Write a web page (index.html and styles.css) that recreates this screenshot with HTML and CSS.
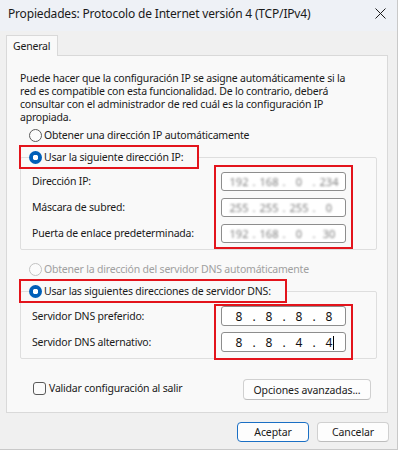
FILE: index.html
```html
<!DOCTYPE html>
<html lang="es">
<head>
<meta charset="utf-8">
<title>Propiedades: Protocolo de Internet versión 4 (TCP/IPv4)</title>
<link rel="stylesheet" href="styles.css">
</head>
<body>
<div class="window">
  <div class="titlebar">
    <span class="title">Propiedades: Protocolo de Internet versión 4 (TCP/IPv4)</span>
    <svg class="close" width="11" height="11" viewBox="0 0 11 11"><path d="M0.5 0.5L10.5 10.5M10.5 0.5L0.5 10.5" stroke="#1b1b1b" stroke-width="1"/></svg>
  </div>
  <div class="tabs"><div class="tab">General</div></div>
  <div class="panel">
    <p class="intro">Puede hacer que la configuración IP se asigne automáticamente si la<br>red es compatible con esta funcionalidad. De lo contrario, deberá<br>consultar con el administrador de red cuál es la configuración IP<br>apropiada.</p>

    <div class="radio-row first"><span class="radio"></span><span>Obtener una dirección IP automáticamente</span></div>

    <div class="group ip-group">
      <div class="legend-box"><span class="legend"><span class="radio checked"></span><span>Usar la siguiente dirección IP:</span></span></div>
      <div class="group-body">
        <div class="labels">
          <div class="label">Dirección IP:</div>
          <div class="label">Máscara de subred:</div>
          <div class="label">Puerta de enlace predeterminada:</div>
        </div>
        <div class="mark">
          <div class="ipbox"><div class="fields blurred"><span class="f">192</span><span class="d">.</span><span class="f">168</span><span class="d">.</span><span class="f">0</span><span class="d">.</span><span class="f">234</span></div></div>
          <div class="ipbox"><div class="fields blurred"><span class="f">255</span><span class="d">.</span><span class="f">255</span><span class="d">.</span><span class="f">255</span><span class="d">.</span><span class="f">0</span></div></div>
          <div class="ipbox"><div class="fields blurred"><span class="f">192</span><span class="d">.</span><span class="f">168</span><span class="d">.</span><span class="f">0</span><span class="d">.</span><span class="f">30</span></div></div>
        </div>
      </div>
    </div>

    <div class="radio-row disabled"><span class="radio"></span><span>Obtener la dirección del servidor DNS automáticamente</span></div>

    <div class="group dns-group">
      <div class="legend-box"><span class="legend"><span class="radio checked"></span><span>Usar las siguientes direcciones de servidor DNS:</span></span></div>
      <div class="group-body">
        <div class="labels">
          <div class="label">Servidor DNS preferido:</div>
          <div class="label">Servidor DNS alternativo:</div>
        </div>
        <div class="mark">
          <div class="ipbox"><div class="fields"><span class="f">8</span><span class="d">.</span><span class="f">8</span><span class="d">.</span><span class="f">8</span><span class="d">.</span><span class="f">8</span></div></div>
          <div class="ipbox"><div class="fields"><span class="f">8</span><span class="d">.</span><span class="f">8</span><span class="d">.</span><span class="f">4</span><span class="d">.</span><span class="f">4<span class="caret"></span></span></div></div>
        </div>
      </div>
    </div>

    <div class="bottom-row">
      <label class="check"><span class="checkbox"></span><span>Validar configuración al salir</span></label>
      <button class="btn adv">Opciones avanzadas...</button>
    </div>
  </div>
  <div class="footer">
    <button class="btn primary">Aceptar</button>
    <button class="btn">Cancelar</button>
  </div>
</div>
</body>
</html>
```

FILE: styles.css
```css
* { box-sizing: border-box; }
html, body { margin: 0; padding: 0; }
body {
  width: 398px;
  height: 450px;
  overflow: hidden;
  background: #f0f0f0;
  font-family: "Noto Sans", "Open Sans", sans-serif;
  font-size: 10.5px;
  letter-spacing: -0.2px;
  color: #1a1a1a;
}
.window {
  width: 398px;
  height: 450px;
  background: #f0f0f0;
  border-right: 1px solid #c9c9c9;
  border-bottom: 1px solid #c9c9c9;
  display: flex;
  flex-direction: column;
}
.titlebar {
  height: 31px;
  background: #eef1f6;
  display: flex;
  align-items: center;
  justify-content: space-between;
  padding: 0 11px 4px 8px;
}
.title {
  font-size: 12px;
  letter-spacing: -0.18px;
  color: #1a1a1a;
}
.close { display: block; }
.tabs {
  padding: 4px 0 0 6px;
  display: flex;
}
.tab {
  width: 52px;
  height: 21px;
  background: #f9f9f9;
  border: 1px solid #d9d9d9;
  border-bottom: none;
  margin-bottom: -1px;
  padding: 2px 0 0 6px;
  line-height: 17px;
  position: relative;
  z-index: 1;
}
.panel {
  margin: 0 9px 0 6px;
  height: 358px;
  background: #f9f9f9;
  border: 1px solid #d9d9d9;
  padding: 16px 10px 0 13px;
  display: flex;
  flex-direction: column;
}
.intro {
  margin: 0;
  line-height: 13px;
  white-space: nowrap;
}
.radio-row {
  height: 20px;
  display: flex;
  align-items: center;
  gap: 2px;
  padding-left: 9px;
}
.radio-row.first { margin-top: 1px; }
.radio-row.disabled { margin-top: 9px; color: #a0a0a0; }
.radio {
  width: 13px;
  height: 13px;
  border-radius: 50%;
  border: 1px solid #5a5a5a;
  background: #fbfbfb;
  flex: none;
  display: inline-block;
}
.radio-row.disabled .radio { border-color: #c2c2c2; }
.radio.checked {
  border: none;
  background: radial-gradient(circle, #ffffff 0 2.6px, #005fb8 3px);
}
.group {
  margin-top: 12px;
  border: 1px solid #dedede;
  border-radius: 2px;
}
.legend-box {
  margin: -13px 0 0 -2px;
  width: fit-content;
  height: 24px;
  border: 2px solid #e3141c;
  padding-left: 8px;
  display: flex;
  align-items: center;
}
.legend {
  height: 20px;
  display: flex;
  align-items: center;
  gap: 2px;
  background: #f9f9f9;
  padding-right: 14px;
}
.group-body {
  display: flex;
  padding: 0 23px 0 11px;
}
.labels {
  flex: 1;
  display: flex;
  flex-direction: column;
}
.mark {
  width: 139px;
  border: 2px solid #e3141c;
  display: flex;
  flex-direction: column;
  padding: 0 5px;
}
.ipbox {
  width: 125px;
  background: #ffffff;
  border: 1px solid #8d8d8d;
  border-radius: 3px;
  display: flex;
  align-items: center;
  padding-left: 6px;
  overflow: hidden;
}
.fields { display: flex; align-items: center; letter-spacing: 0; }
.f { width: 22px; text-align: center; font-size: 12px; color: #111; white-space: nowrap; }
.d { width: 8px; text-align: center; font-size: 12px; color: #111; }
.blurred { filter: blur(1.3px); opacity: 0.85; }
.blurred .f, .blurred .d { font-size: 11px; color: #6a6a6a; }
.caret {
  display: inline-block;
  width: 1px;
  height: 14px;
  background: #000;
  vertical-align: -3px;
  margin-left: 1px;
  margin-right: -2px;
}

/* IP group geometry */
.ip-group .group-body { margin-top: -4px; }
.ip-group .labels { padding-top: 7px; gap: 7px; }
.ip-group .label { height: 19px; line-height: 19px; }
.ip-group .mark { padding-top: 5px; padding-bottom: 4px; gap: 7px; }
.ip-group .ipbox { height: 19px; }

/* DNS group geometry */
.dns-group .group-body { margin-top: 1px; }
.dns-group .labels { padding-top: 2px; gap: 6px; }
.dns-group .label { height: 20px; line-height: 20px; }
.dns-group .mark { padding-top: 0; padding-bottom: 6px; gap: 6px; margin-bottom: -2px; }
.dns-group .ipbox { height: 20px; }

.bottom-row {
  margin-top: 20px;
  display: flex;
  align-items: center;
  justify-content: space-between;
  padding: 0 6px 0 13px;
}
.check {
  display: flex;
  align-items: center;
  gap: 3px;
  margin-top: -3px;
}
.checkbox {
  width: 13px;
  height: 13px;
  border: 1px solid #5a5a5a;
  border-radius: 3px;
  background: #fbfbfb;
  display: inline-block;
}
.btn {
  font-family: "Noto Sans", "Open Sans", sans-serif;
  font-size: 10.5px;
  letter-spacing: -0.1px;
  color: #1a1a1a;
  background: #fdfdfd;
  border: 1px solid #d0d0d0;
  border-bottom-color: #bdbdbd;
  border-radius: 4px;
  height: 21px;
  padding: 0;
  line-height: 18px;
}
.adv { width: 128px; }
.footer {
  display: flex;
  justify-content: flex-end;
  gap: 8px;
  padding: 9px 8px 0 0;
}
.footer .btn { width: 72px; height: 20px; }
.btn.primary { border: 1px solid #1a6fc4; }
```
